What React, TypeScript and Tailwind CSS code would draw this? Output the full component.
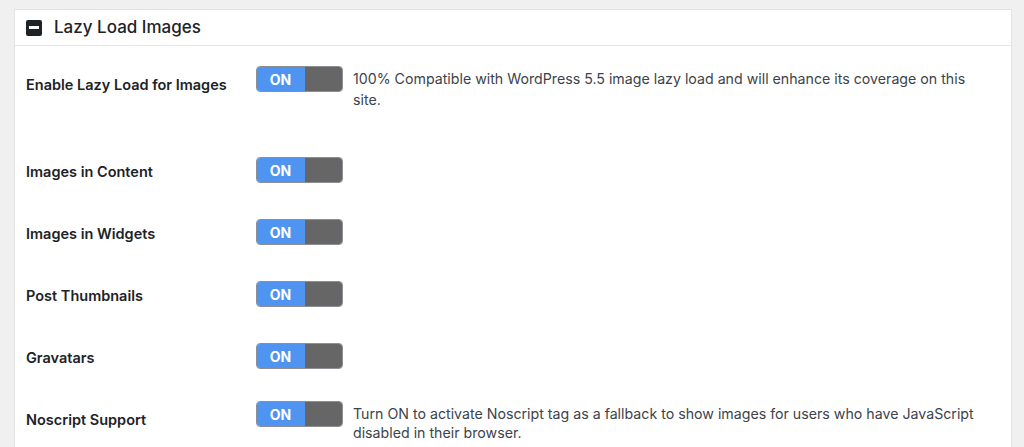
const rows = [
  {
    label: "Enable Lazy Load for Images",
    desc: "100% Compatible with WordPress 5.5 image lazy load and will enhance its coverage on this site.",
    row: "h-[95px]",
    togglePad: "pt-[20px]",
    labelPad: "pt-[29px]",
    descPad: "pt-[22px] leading-[21px]",
  },
  { label: "Images in Content", row: "h-[62px]", togglePad: "pt-[16px]", labelPad: "pt-[21px]" },
  { label: "Images in Widgets", row: "h-[62px]", togglePad: "pt-[16px]", labelPad: "pt-[21px]" },
  { label: "Post Thumbnails", row: "h-[62px]", togglePad: "pt-[16px]", labelPad: "pt-[21px]" },
  { label: "Gravatars", row: "h-[62px]", togglePad: "pt-[16px]", labelPad: "pt-[21px]" },
  {
    label: "Noscript Support",
    desc: "Turn ON to activate Noscript tag as a fallback to show images for users who have JavaScript disabled in their browser.",
    row: "h-[70px]",
    togglePad: "pt-[12px]",
    labelPad: "pt-[21px]",
    descPad: "pt-[15px] leading-[19px]",
  },
];

const Toggle = () => (
  <div className="flex h-[26px] w-[87px] overflow-hidden rounded-[4px] border border-[#8c8f94]">
    <div className="flex w-[48px] items-center justify-center bg-[#4f94f0] pr-[1px] text-[14px] font-bold text-white">
      ON
    </div>
    <div className="flex-1 bg-[#666666]" />
  </div>
);

const App = () => {
  return (
    <div className="h-[447px] overflow-hidden bg-[#f0f0f1] pt-[9px] pl-[14px] pr-[12px] font-['Inter','Liberation_Sans',sans-serif] text-[#1d2327]">
      <div className="h-[460px] border border-[#e4e4e7] bg-white">
        {/* header */}
        <div className="flex h-[36px] items-center gap-[12px] border-b border-[#e6e6e8] pl-[11px]">
          <div className="flex h-[16px] w-[16px] items-center justify-center rounded-[2px] bg-[#1d2327]">
            <div className="h-[3px] w-[10px] bg-white" />
          </div>
          <h2 className="text-[17px] font-medium">Lazy Load Images</h2>
        </div>

        {/* settings rows */}
        <div className="flex flex-col pl-[11px]">
          {rows.map((r, i) => (
            <div key={i} className={`flex ${r.row}`}>
              <div className={`w-[230px] shrink-0 text-[14.5px] font-semibold leading-[20px] ${r.labelPad}`}>
                {r.label}
              </div>
              <div className={r.togglePad}>
                <Toggle />
              </div>
              {r.desc && (
                <p className={`ml-[10px] w-[640px] text-[14.2px] text-[#3c434a] ${r.descPad}`}>{r.desc}</p>
              )}
            </div>
          ))}
        </div>
      </div>
    </div>
  );
};

export default App;
